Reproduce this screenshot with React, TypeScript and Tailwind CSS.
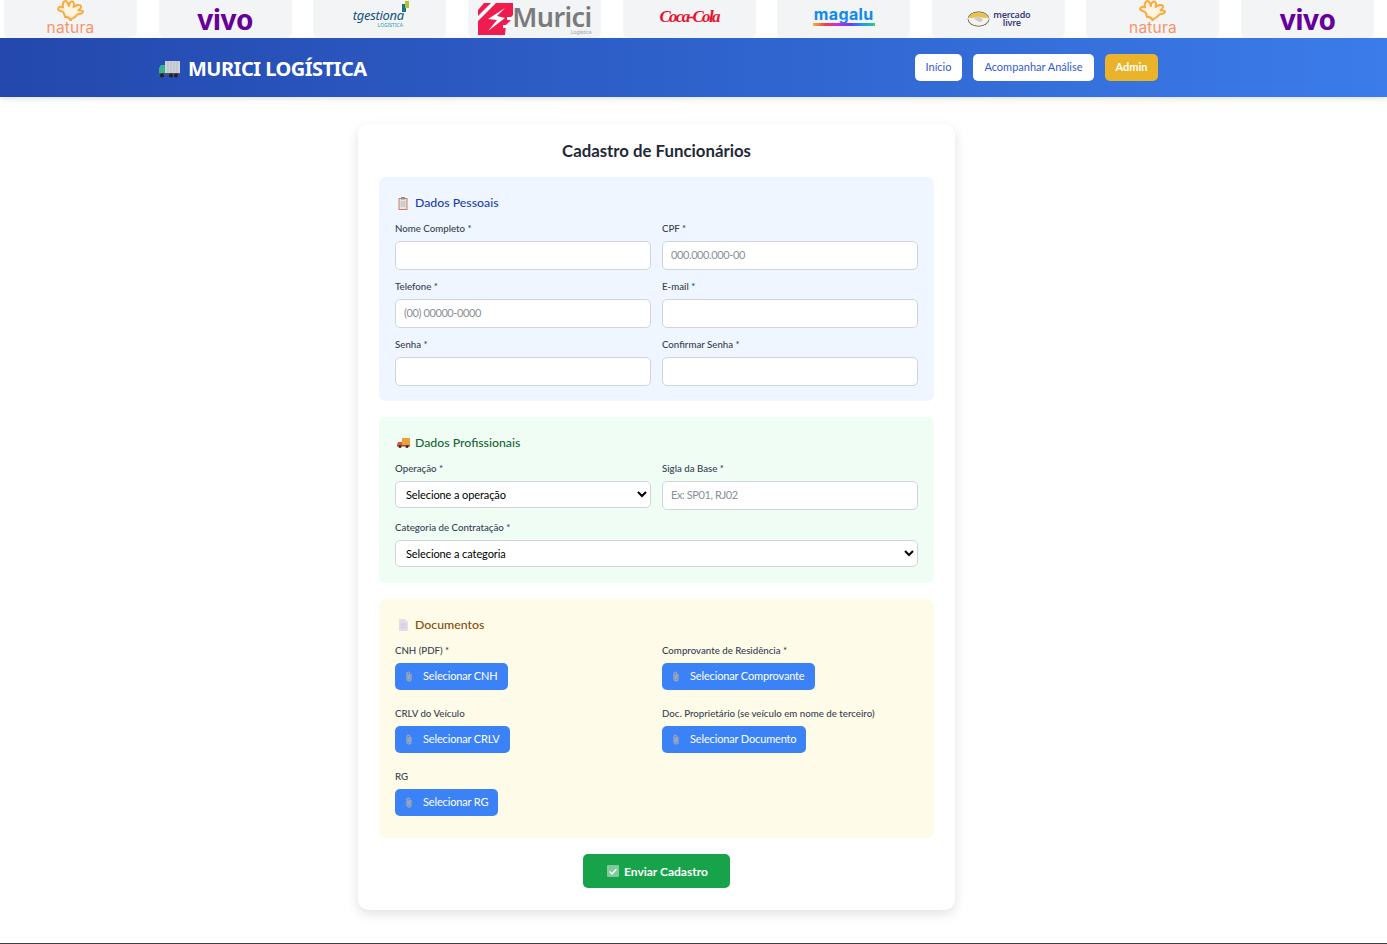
import React from "react";

const Natura = () => (
  <div className="flex flex-col items-center -mt-[4px]">
    <svg width="30" height="21" viewBox="0 0 30 21">
      <path d="M15 20.500c-2-3-4-4-6-3.500-1-2.500-.5-4-2-5C5 11 2.500 11 2 9c0-2 3-3 5-1.500C6.500 5 7 1 9.500 1 12 1 12 5 13 6c0-2.500 1.500-5 3.500-4.500 2 .5 1.500 4 1 5.500C20 5 24 4 25 6c.8 2-2 3.500-2.500 4.500 1.500 0 4-.5 4.500 1 .3 2-3 2.500-5 2.500-1.500 1-2 2-3 3-1 .8-3 1-4.500 3.500z" fill="#fff4e3" stroke="#f9ab3c" strokeWidth="2" strokeLinejoin="round" />
    </svg>
    <span className="text-[15.500px] leading-[13px] text-[#f7946a] font-['Inter',sans-serif] font-normal tracking-[0.2px]">natura</span>
  </div>
);

const Vivo = () => (
  <span className="text-[28px] leading-[34px] font-bold text-[#660099] font-['Noto_Sans',sans-serif] tracking-[-0.5px]">vivo</span>
);

const Tgestiona = () => (
  <div className="relative flex flex-col items-end -ml-[3px] -mt-[1px]">
    <svg width="7" height="11" viewBox="0 0 7 11" className="absolute -right-[5px] -top-[8px]">
      <rect x="0" y="3" width="4" height="8" fill="#1d6f8f" />
      <rect x="3" y="0" width="4" height="7" fill="#b6c22b" />
    </svg>
    <span className="text-[13px] leading-[13px] italic text-[#14537d] font-['Noto_Sans',sans-serif] tracking-[-0.3px]">tgestiona</span>
    <span className="text-[5px] leading-[6px] text-[#18a0a8] font-['Noto_Sans',sans-serif] self-center ml-[24px]">LOGÍSTICA</span>
  </div>
);

const Murici = () => (
  <div className="flex items-end ml-[1px] mt-[1px]">
    <svg width="35" height="33" viewBox="0 0 35 33" className="shrink-0">
      <path d="M6 0h29v12l-3 3 1 2-5 5-1 10H0V7z" fill="#ee1c4f" />
      <path d="M0 13 13 0h5L0 18z" fill="#fff" />
      <path d="M27 5 10 16l9 1-9 11 17-13-8-2z" fill="#fff" />
      <rect x="29" y="14" width="4" height="3" fill="#fff" />
      <rect x="25" y="22" width="4" height="3" fill="#fff" />
    </svg>
    <div className="flex flex-col items-end -ml-[1px]">
      <span className="text-[27px] leading-[25px] font-semibold text-[#7b7b7d] font-['Noto_Sans',sans-serif] tracking-[-0.6px]">Murici</span>
      <span className="text-[5px] leading-[7px] text-[#9a9a9c] font-['Noto_Sans',sans-serif]">Logística</span>
    </div>
  </div>
);

const Coca = () => (
  <span className="text-[17px] leading-[26px] font-bold italic text-[#e8112d] font-['Liberation_Serif',serif] tracking-[-1.700px] whitespace-nowrap -mt-[4px]">Coca-Cola</span>
);

const Magalu = () => (
  <div className="flex flex-col items-center -mt-[6px]">
    <span className="text-[16px] leading-[15px] font-bold text-[#0f8af0] font-['Inter',sans-serif] tracking-[0.4px]">magalu</span>
    <div className="mt-[1px] h-[3px] w-[62px] bg-[linear-gradient(90deg,#f5b52e,#ef3f4a,#d62ad0,#6a3df0,#1c9cf0,#2fd36a)]" />
  </div>
);

const Mercado = () => (
  <div className="flex items-center gap-[3px] -mt-[1px] ml-[1px]">
    <svg width="23" height="16" viewBox="0 0 24 17">
      <ellipse cx="12" cy="8.500" rx="11.500" ry="8" fill="#2d3277" />
      <ellipse cx="12" cy="8.500" rx="11" ry="7.400" fill="#e8c24a" />
      <path d="M1 7c4 1.500 8-1 11-1s7 2.500 11 1c.3 3-3 6-5 7-3 1.500-9 1.500-12 0-2-1-5-4-5-7z" fill="#f4f4f4" />
      <path d="M7 8l4-2 3 .5 3 3-3 2.500-3-1z" fill="#ccc" />
    </svg>
    <div className="flex flex-col items-center text-[9px] leading-[8px] font-semibold text-[#3b3f77] font-['Noto_Sans',sans-serif] tracking-[-0.2px]">
      <span>mercado</span>
      <span>livre</span>
    </div>
  </div>
);

const logos = [
  { id: "n1", el: <Natura /> },
  { id: "v1", el: <Vivo /> },
  { id: "t", el: <Tgestiona /> },
  { id: "m", el: <Murici /> },
  { id: "c", el: <Coca /> },
  { id: "g", el: <Magalu /> },
  { id: "l", el: <Mercado /> },
  { id: "n2", el: <Natura /> },
  { id: "v2", el: <Vivo /> },
];

const Input = ({ placeholder }: { placeholder?: string }) => (
  <input
    placeholder={placeholder}
    className="block w-full h-[29px] pl-[8px] pr-[9px] pb-[2px] bg-white border border-[#d1d5db] rounded-[5px] text-[11px] tracking-[-0.400px] placeholder:text-[#8a8f98] outline-none"
  />
);

const Select = ({ label }: { label: string }) => (
  <select className="block w-full h-[27px] pl-[6px] pr-[1px] bg-white border border-[#d1d5db] rounded-[5px] text-[11px] text-black tracking-[-0.100px] outline-none">
    <option>{label}</option>
  </select>
);

const Field = ({ label, children }: { label: string; children: React.ReactNode }) => (
  <div>
    <label className="block text-[9.700px] leading-[13px] font-medium text-[#374151] mb-[6px]">{label}</label>
    {children}
  </div>
);

const Clip = () => (
  <svg width="8" height="11" viewBox="0 0 7 11" fill="none" stroke="#9aa5ba" strokeWidth="1.300" className="shrink-0">
    <path d="M5.500 3v5a2 2 0 0 1-4 0V2.500a1.300 1.300 0 0 1 2.600 0V7.500a.6.6 0 0 1-1.200 0V3.500" />
  </svg>
);

const FileField = ({ label, btn }: { label: string; btn: string }) => (
  <div className="min-h-[50px]">
    <label className="block text-[9.700px] leading-[13px] font-medium text-[#374151] mb-[6px]">{label}</label>
    <button className="inline-flex items-center gap-[10px] h-[27px] pl-[10px] pr-[10px] bg-[#3b82f6] rounded-[5px] text-white text-[11px] tracking-[-0.150px] whitespace-nowrap">
      <Clip />
      <span>{btn}</span>
    </button>
  </div>
);

export default function App() {
  return (
    <div className="min-h-[944px] bg-white font-['Lato',sans-serif] overflow-hidden">
      <div className="h-[38px] flex gap-[21.650px] pl-[4px] overflow-hidden">
        {logos.map((l) => (
          <div key={l.id} className="w-[133px] h-[38px] shrink-0 bg-[#f3f4f6] rounded-b-[6px] flex items-center justify-center overflow-hidden">
            {l.el}
          </div>
        ))}
      </div>

      <header className="h-[59px] bg-gradient-to-r from-[#2448ad] to-[#3b7cea] shadow-[0_2px_5px_rgba(0,0,0,0.12)] flex items-center pl-[158px]">
        <div className="w-[1000px] flex items-center justify-between">
          <div className="flex items-center gap-[8px]">
            <svg width="22" height="18" viewBox="0 0 22 18" className="mt-[2px]">
              <rect x="7" y="1" width="15" height="13" fill="#cfd3da" />
              <path d="M10 1v13M13 1v13M16 1v13M19 1v13" stroke="#aab0ba" strokeWidth="0.700" />
              <path d="M1 8l2-3h4v9H1z" fill="#35b58c" />
              <rect x="1" y="13" width="21" height="2" fill="#4b5563" />
              <circle cx="4" cy="15.500" r="2" fill="#222" />
              <circle cx="13" cy="15.500" r="2" fill="#222" />
              <circle cx="18" cy="15.500" r="2" fill="#222" />
            </svg>
            <h1 className="mt-[2px] text-[20px] leading-[28px] font-bold text-white tracking-[-0.500px] font-['Noto_Sans',sans-serif]">MURICI LOGÍSTICA</h1>
          </div>
          <nav className="flex items-center gap-[11px] -mt-[1px]">
            <a className="h-[27px] w-[47px] pt-[1px] flex items-center justify-center bg-white rounded-[5px] text-[11px] text-[#2f5bd6]">Início</a>
            <a className="h-[27px] w-[121px] pt-[1px] flex items-center justify-center bg-white rounded-[5px] text-[11px] text-[#2f5bd6]">Acompanhar Análise</a>
            <a className="h-[27px] w-[53px] pt-[1px] flex items-center justify-center bg-[#eab329] rounded-[5px] text-[11px] text-white font-bold">Admin</a>
          </nav>
        </div>
      </header>

      <main className="ml-[358px] w-[597px] mt-[27px] mb-[33px] bg-white rounded-[10px] shadow-[0_4px_12px_rgba(0,0,0,0.12)] px-[21px] pt-[15px] pb-[22px]">
        <h2 className="text-center text-[16.800px] leading-[24px] font-bold text-[#1f2937] mb-[14px]">Cadastro de Funcionários</h2>

        <section className="bg-[#eff6ff] rounded-[7px] px-[16px] pt-[17px] h-[224px]">
          <h3 className="flex items-center gap-[7px] pl-[3px] text-[12.300px] leading-[18px] font-medium text-[#1e40af] mb-[10px]">
            <svg width="10" height="13" viewBox="0 0 10 13">
              <rect x="0.500" y="1" width="9" height="12" rx="0.500" fill="#c9805a" />
              <rect x="1.500" y="2" width="7" height="10" fill="#e8e4e0" />
              <rect x="3" y="0" width="4" height="2.500" fill="#8b93a1" />
              <path d="M2.500 5h5M2.500 7h5M2.500 9h5" stroke="#a9a9ad" strokeWidth="0.800" />
            </svg>
            Dados Pessoais
          </h3>
          <div className="grid grid-cols-2 gap-x-[11px] gap-y-[10px]">
            <Field label="Nome Completo *"><Input /></Field>
            <Field label="CPF *"><Input placeholder="000.000.000-00" /></Field>
            <Field label="Telefone *"><Input placeholder="(00) 00000-0000" /></Field>
            <Field label="E-mail *"><Input /></Field>
            <Field label="Senha *"><Input /></Field>
            <Field label="Confirmar Senha *"><Input /></Field>
          </div>
        </section>

        <section className="mt-[16px] bg-[#f0fdf4] rounded-[7px] px-[16px] pt-[17px] h-[166px]">
          <h3 className="flex items-center gap-[5px] pl-[2px] text-[12.300px] leading-[18px] font-medium text-[#166534] mb-[10px]">
            <svg width="13" height="10" viewBox="0 0 13 10">
              <rect x="5" y="0" width="8" height="7" fill="#e9a13b" />
              <path d="M0 7l1-3h4v4H0z" fill="#e2553d" />
              <rect x="0" y="7" width="13" height="1.500" fill="#b3402f" />
              <circle cx="3" cy="8.500" r="1.500" fill="#333" />
              <circle cx="10" cy="8.500" r="1.500" fill="#333" />
            </svg>
            Dados Profissionais
          </h3>
          <div className="grid grid-cols-2 gap-x-[11px] gap-y-[11px]">
            <Field label="Operação *"><Select label="Selecione a operação" /></Field>
            <Field label="Sigla da Base *"><Input placeholder="Ex: SP01, RJ02" /></Field>
            <div className="col-span-2">
              <Field label="Categoria de Contratação *"><Select label="Selecione a categoria" /></Field>
            </div>
          </div>
        </section>

        <section className="mt-[16px] bg-[#fefce8] rounded-[7px] px-[16px] pt-[17px] h-[239px]">
          <h3 className="flex items-center gap-[7px] pl-[4px] text-[12.300px] leading-[18px] font-medium text-[#854d0e] mb-[10px]">
            <svg width="9" height="12" viewBox="0 0 9 12">
              <path d="M0 0h6l3 3v9H0z" fill="#e3dcec" />
              <path d="M1.500 5h6M1.500 7h6M1.500 9h6" stroke="#c9c3d3" strokeWidth="0.800" />
            </svg>
            Documentos
          </h3>
          <div className="grid grid-cols-2 gap-x-[11px] gap-y-[13px]">
            <FileField label="CNH (PDF) *" btn="Selecionar CNH" />
            <FileField label="Comprovante de Residência *" btn="Selecionar Comprovante" />
            <FileField label="CRLV do Veículo" btn="Selecionar CRLV" />
            <FileField label="Doc. Proprietário (se veículo em nome de terceiro)" btn="Selecionar Documento" />
            <FileField label="RG" btn="Selecionar RG" />
          </div>
        </section>

        <div className="flex justify-center mt-[16px]">
          <button className="h-[34px] w-[147px] pl-[24px] flex items-center gap-[5px] bg-[#16a34a] rounded-[5px] text-white text-[12px] font-bold">
            <svg width="12" height="12" viewBox="0 0 12 12">
              <rect width="12" height="12" rx="1" fill="#7fc99c" />
              <path d="M2.500 6.500l2.500 2.500 4.500-5" stroke="#fff" strokeWidth="1.300" fill="none" />
            </svg>
            <span className="mt-[1px]">Enviar Cadastro</span>
          </button>
        </div>
      </main>
      <div className="h-px bg-[#3f3f46]" />
    </div>
  );
}
